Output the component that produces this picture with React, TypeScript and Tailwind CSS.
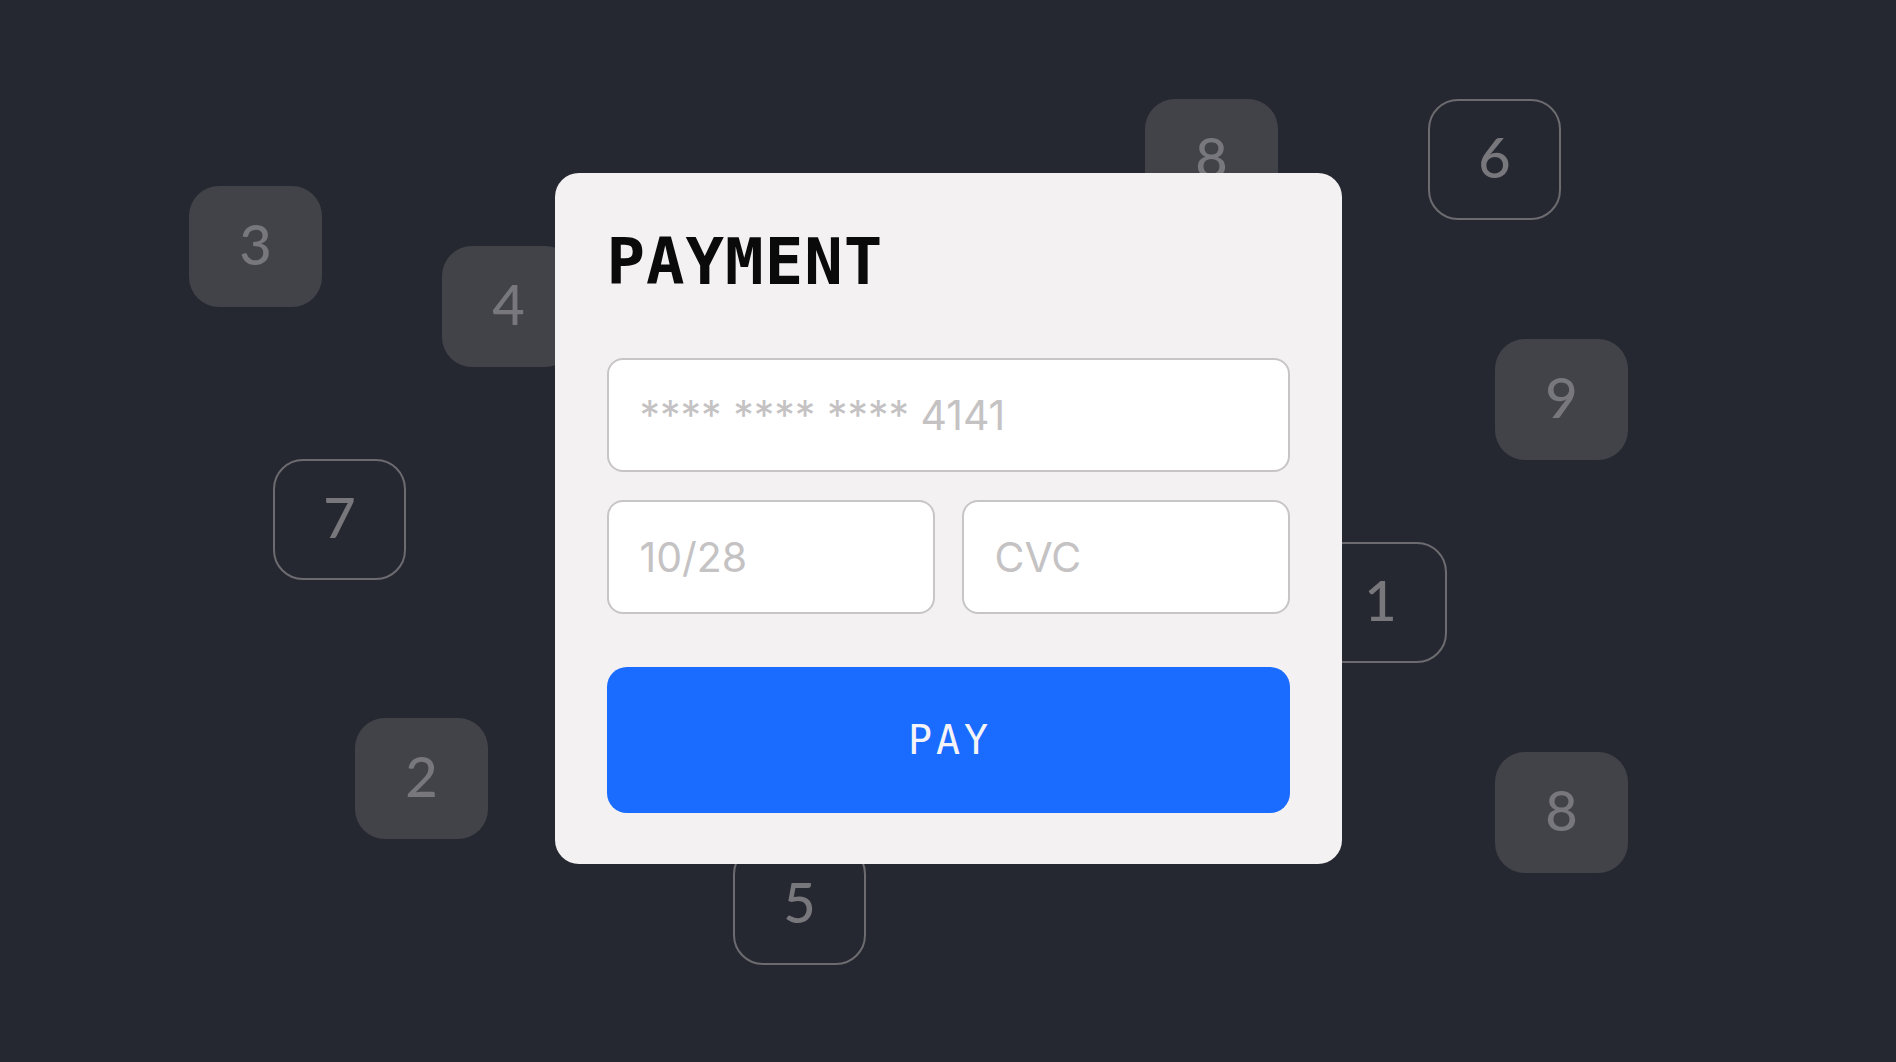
const keys = [
  { n: "3", x: 189, y: 186, filled: true },
  { n: "4", x: 442, y: 246, filled: true },
  { n: "7", x: 273, y: 459, filled: false },
  { n: "2", x: 355, y: 718, filled: true },
  { n: "5", x: 733, y: 844, filled: false },
  { n: "8", x: 1145, y: 99, filled: true },
  { n: "6", x: 1428, y: 99, filled: false },
  { n: "9", x: 1495, y: 339, filled: true },
  { n: "1", x: 1314, y: 542, filled: false },
  { n: "8", x: 1495, y: 752, filled: true },
];

function Key({ n, x, y, filled }: { n: string; x: number; y: number; filled: boolean }) {
  return (
    <div
      className={
        filled
          ? "absolute flex h-[121px] w-[133px] items-center justify-center rounded-[30px] bg-[#424349]"
          : "absolute flex h-[121px] w-[133px] items-center justify-center rounded-[30px] border-2 border-[#6c6b70]"
      }
      style={{ left: x, top: y }}
    >
      <span className="pb-[6px] font-['Lato',sans-serif] text-[56px] font-medium leading-none text-[#78777c]">{n}</span>
    </div>
  );
}

function Field({ placeholder }: { placeholder: string }) {
  return (
    <input
      type="text"
      placeholder={placeholder}
      className="h-[114px] w-full rounded-[16px] border-2 border-[#c8c5c6] bg-white px-[31px] font-['Inter',sans-serif] text-[41px] text-[#1f1f1f] placeholder:text-[#c4c2c3] focus:outline-none"
    />
  );
}

export default function App() {
  return (
    <div className="relative flex h-[1062px] w-full justify-center overflow-hidden bg-[#262831] pt-[173px]">
      {keys.map((k, i) => (
        <Key key={i} {...k} />
      ))}

      <div className="relative z-10 h-[691px] w-[787px] rounded-[24px] bg-[#f3f1f2] p-[52px]">
        <h1 className="mb-[64px] mt-[5px] font-['DejaVu_Sans_Mono',monospace] text-[64px] font-bold leading-[64px] tracking-[1px] text-[#0a0a0a]">
          PAYMENT
        </h1>

        <div className="flex flex-col gap-[28px]">
          <Field placeholder="**** **** **** 4141" />
          <div className="grid grid-cols-2 gap-[27px]">
            <Field placeholder="10/28" />
            <Field placeholder="CVC" />
          </div>
        </div>

        <button className="mt-[53px] flex h-[146px] w-full items-center justify-center rounded-[20px] bg-[#1a6bff] pl-[4px] font-['DejaVu_Sans_Mono',monospace] text-[40px] tracking-[4px] text-[#f4f4f6]">
          PAY
        </button>
      </div>
    </div>
  );
}
